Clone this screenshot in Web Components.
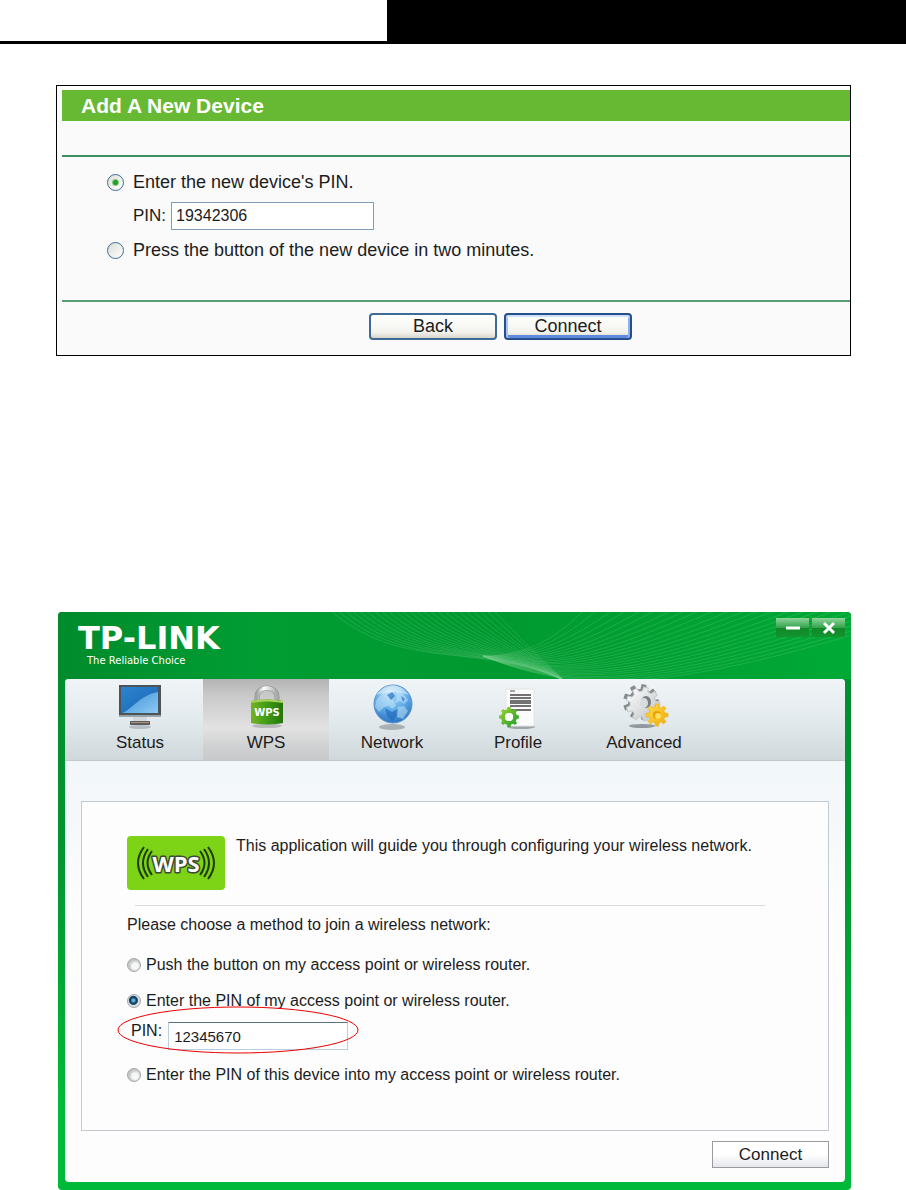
<!DOCTYPE html>
<html lang="en">
<head>
<meta charset="utf-8">
<title>WPS configuration</title>
<style>
  body {
    margin: 0;
    background: #fff;
    color: #1c1c1c;
    font-family: "Liberation Sans", Arial, sans-serif;
  }
  main {
    display: flex;
    flex-direction: column;
    padding: 41px 55px 0 56px;
  }
  wps-utility {
    margin: 256px 0 0 2px;
  }
</style>
</head>
<body>
<page-banner></page-banner>
<main>
  <title-panel>
    <span slot="title">Add A New Device</span>
    <device-form></device-form>
    <xp-button slot="actions">Back</xp-button>
    <xp-button slot="actions" focused>Connect</xp-button>
  </title-panel>

  <wps-utility>
    <tool-tab slot="tabs" icon="status">Status</tool-tab>
    <tool-tab slot="tabs" icon="wps" selected>WPS</tool-tab>
    <tool-tab slot="tabs" icon="network">Network</tool-tab>
    <tool-tab slot="tabs" icon="profile">Profile</tool-tab>
    <tool-tab slot="tabs" icon="advanced">Advanced</tool-tab>
    <wps-form></wps-form>
  </wps-utility>
</main>

<script>
class PageBanner extends HTMLElement {
  constructor() {
    super();
    this.attachShadow({mode: 'open'}).innerHTML = `
      <style>
        :host {
          display: grid;
          grid-template-columns: 427fr 573fr;
          height: 41px;
          border-bottom: 3px solid #000;
        }
        .dark { background: #000; }
      </style>
      <div></div>
      <div class="dark"></div>
    `;
  }
}
customElements.define('page-banner', PageBanner);

class TitlePanel extends HTMLElement {
  constructor() {
    super();
    this.attachShadow({mode: 'open'}).innerHTML = `
      <style>
        :host {
          display: block;
          border: 1px solid #000;
          padding: 4px 0 0 5px;
          background: linear-gradient(#fff 4px, #fafafa 4px);
        }
        h2 {
          margin: 0;
          padding-left: 19px;
          background: #67b933;
          color: #fff;
          font-size: 21px;
          line-height: 31px;
        }
        .content {
          box-sizing: border-box;
          min-height: 147px;
          margin-top: 34px;
          padding: 11px 0 0 45px;
          border-top: 2px solid #3c8f62;
          border-bottom: 2px solid #589c75;
        }
        .actions {
          display: flex;
          justify-content: center;
          gap: 7px;
          padding: 11px 0 15px 89px;
        }
      </style>
      <h2><slot name="title"></slot></h2>
      <div class="content"><slot></slot></div>
      <div class="actions"><slot name="actions"></slot></div>
    `;
  }
}
customElements.define('title-panel', TitlePanel);

class DeviceForm extends HTMLElement {
  constructor() {
    super();
    this.attachShadow({mode: 'open'}).innerHTML = `
      <style>
        :host { display: block; font-size: 18px; }
        .row {
          display: flex;
          align-items: center;
          gap: 9px;
          height: 28px;
        }
        .row + .row { margin-top: 6px; }
        .pin { padding-left: 26px; gap: 5px; font-size: 17px; }
        input[type=radio] {
          appearance: none;
          margin: 0;
          width: 17px;
          height: 17px;
          border: 1px solid #3a6c99;
          border-radius: 50%;
          background: linear-gradient(135deg, #dcdcd6, #fff);
        }
        input[type=radio]:checked {
          background:
            radial-gradient(circle, #21a121 0 2px, transparent 4px),
            linear-gradient(135deg, #dcdcd6, #fff);
        }
        input[type=text] {
          box-sizing: border-box;
          width: 203px;
          height: 28px;
          padding: 0 4px;
          border: 1px solid #7f9db9;
          background: #fff;
          color: inherit;
          font: 16px "Liberation Sans", Arial, sans-serif;
        }
      </style>
      <div class="row">
        <input type="radio" name="method" id="by-pin" checked>
        <label for="by-pin">Enter the new device's PIN.</label>
      </div>
      <div class="row pin">
        <label for="pin">PIN:</label>
        <input type="text" id="pin" value="19342306">
      </div>
      <div class="row">
        <input type="radio" name="method" id="by-button">
        <label for="by-button">Press the button of the new device in two minutes.</label>
      </div>
    `;
  }
}
customElements.define('device-form', DeviceForm);

class XpButton extends HTMLElement {
  constructor() {
    super();
    this.attachShadow({mode: 'open'}).innerHTML = `
      <style>
        :host { display: block; }
        button {
          display: block;
          box-sizing: border-box;
          width: 128px;
          height: 27px;
          padding: 0;
          border: 2px solid #3d6a96;
          border-radius: 4px;
          background: linear-gradient(#fff, #f3f3ee 75%, #d8d5ca);
          color: #1c1c1c;
          font: 18px/23px "Liberation Sans", Arial, sans-serif;
        }
        :host([focused]) button {
          border-color: #26508c;
          box-shadow: inset 0 2px #cfe0fb, inset 2px 0 #a9c4f2, inset -2px 0 #8eb0ee, inset 0 -3px #5f8ade;
        }
      </style>
      <button type="button"><slot></slot></button>
    `;
  }
}
customElements.define('xp-button', XpButton);

// n teeth between radius r and R, around cx, cy
function gear(cx, cy, r, R, n) {
  const pts = [];
  for (let i = 0; i < n; i++) {
    [[-.3, r], [-.2, R], [.2, R], [.3, r]].forEach(([o, d]) => {
      const a = (i + o) / n * Math.PI * 2;
      pts.push((cx + Math.cos(a) * d).toFixed(1) + ',' + (cy + Math.sin(a) * d).toFixed(1));
    });
  }
  return 'M' + pts.join('L') + 'Z';
}

const ICONS = {
  status: `
    <defs>
      <linearGradient id="a" x2="1" y2="1"><stop stop-color="#2d83ce"/><stop offset="1" stop-color="#1b66b4"/></linearGradient>
      <linearGradient id="b" x2="1" y2="1"><stop stop-color="#3f8fd4"/><stop offset="1" stop-color="#8ccbf4"/></linearGradient>
    </defs>
    <ellipse cx="25" cy="43" rx="11" ry="2" fill="#a4adb2" opacity=".7"/>
    <path d="M4 1h42v32H4z" fill="#4b5559"/>
    <path d="M6 3h37v26H6z" fill="url(#a)"/>
    <path d="M43 8v21H8C19 23 26 11 43 8z" fill="url(#b)"/>
    <path d="M4 31h42v2H4z" fill="#9aa3a7"/>
    <path d="M18 33h14v4H18z" fill="#d3d9dc"/>
    <path d="M15 37h20v4H15z" fill="#5b5c5e"/><path d="M16 38h18v1H16z" fill="#b58f76"/>`,
  wps: `
    <defs>
      <linearGradient id="a"><stop stop-color="#74b323"/><stop offset=".5" stop-color="#409c16"/><stop offset="1" stop-color="#25740c"/></linearGradient>
      <linearGradient id="m"><stop stop-color="#a0a5a6"/><stop offset=".35" stop-color="#fff"/><stop offset="1" stop-color="#a4a7a8"/></linearGradient>
    </defs>
    <ellipse cx="26" cy="42" rx="15" ry="2" fill="#9c9c9c" opacity=".6"/>
    <path d="M16 20V13C16 1 36 1 36 13v7" fill="none" stroke="#8d9091" stroke-width="5"/>
    <path d="M16 20V13C16 1 36 1 36 13v7" fill="none" stroke="url(#m)" stroke-width="4"/>
    <path d="M10 17q16-3 32 0v22q-16 3-32 0z" fill="url(#a)"/>
    <path d="M10 17q16-3 32 0v2q-16-3-32 0z" fill="#a8d554"/>
    <text x="26" y="32" text-anchor="middle" font-family="DejaVu Sans" font-weight="bold" font-size="10" fill="#fff">WPS</text>`,
  network: `
    <defs><radialGradient id="a" cx=".45" cy=".2" r=".85"><stop stop-color="#b6def8"/><stop offset=".5" stop-color="#64aee9"/><stop offset="1" stop-color="#256dbf"/></radialGradient></defs>
    <ellipse cx="25" cy="43" rx="13" ry="3" fill="#858e94" opacity=".6"/>
    <circle cx="26" cy="20" r="19" fill="url(#a)" stroke="#5694cc"/>
    <path d="M11 14l5-6 8-2 2 3-3 5 4 3 2 5-4 3-3-3-5 1-5 5-4-5 1-6zM29 7l6 1 6 8-4 4-4-3-5 2 2-5zM31 23l6-1 4 5-5 8-6-2-1-5z" fill="#d5effc" opacity=".45"/>
    <path d="M18 24l7 4 6-3-1 7-5 5-5-5zM20 11l5-3 3 4-4 4zM34 12l4 3-2 3z" fill="#1f68bb" opacity=".65"/>
    <path d="M9 11Q26-9 42 11 26 5 9 11z" fill="#fff" opacity=".45"/>`,
  profile: `
    <defs><linearGradient id="a" x2="1" y2="1"><stop stop-color="#a6d62c"/><stop offset="1" stop-color="#159b30"/></linearGradient></defs>
    <ellipse cx="28" cy="43" rx="14" ry="2" fill="#81898d" opacity=".7"/>
    <path d="M13 5h28v37H13z" fill="#fbfbfb" stroke="#e1e4e6"/>
    <path d="M17 7h5" stroke="#555"/>
    <path d="M17 11h21M17 14h21M17 17h21M17 19h21M17 22h21M17 26h21" stroke="#727272" stroke-width="2"/>
    <path fill-rule="evenodd" d="${gear(16, 33, 8, 10, 8)}M20 33a4 4 0 1 0-8 0a4 4 0 1 0 8 0z" fill="url(#a)"/>
    <circle cx="16" cy="33" r="4" fill="#fff"/>`,
  advanced: `
    <defs>
      <linearGradient id="m" x2="1" y2="1"><stop stop-color="#fff"/><stop offset="1" stop-color="#bcc0c2"/></linearGradient>
      <linearGradient id="g" x2="1" y2="1"><stop stop-color="#ffdf48"/><stop offset="1" stop-color="#edaa0b"/></linearGradient>
    </defs>
    <ellipse cx="23" cy="42" rx="13" ry="2" fill="#70787d" opacity=".7"/>
    <path d="${gear(22, 18, 13, 18, 9)}" fill="#858a8d"/>
    <path d="${gear(24, 20, 13, 17, 9)}" fill="url(#m)" stroke="#c5c9cb"/>
    <ellipse cx="27" cy="18" rx="5" ry="6" fill="#777d81"/><ellipse cx="25" cy="19" rx="4" ry="5" fill="#d8dcdf"/>
    <path d="${gear(38, 31, 8, 11, 8)}" fill="url(#g)" stroke="#f0b81f"/>
    <circle cx="38" cy="31" r="4" fill="#e99d06"/><circle cx="39" cy="32" r="3" fill="#ffe05a"/>`
};

class ToolTab extends HTMLElement {
  connectedCallback() {
    if (this.shadowRoot) return;
    this.attachShadow({mode: 'open'}).innerHTML = `
      <style>
        :host { display: block; }
        button {
          display: flex;
          flex-direction: column;
          align-items: center;
          width: 126px;
          height: 81px;
          padding: 5px 0 0;
          border: 0;
          background: none;
          color: #1c1c1c;
          font: 17px/22px "Liberation Sans", Arial, sans-serif;
        }
        :host([selected]) button {
          background: linear-gradient(#b3b3b3, #c9c9c9 20%, #e2e2e2 60%, #cfd0d1 85%, #c7c9ca);
        }
        svg { display: block; }
      </style>
      <button type="button">
        <svg width="50" height="48" viewBox="0 0 50 48" aria-hidden="true">${ICONS[this.getAttribute('icon')]}</svg>
        <slot></slot>
      </button>
    `;
  }
}
customElements.define('tool-tab', ToolTab);

// two crossing families of thin curves behind the title bar
function waves() {
  const count = 24;
  const mix = (from, to, t) => Math.round(from + (to - from) * t);
  let out = '';
  for (let i = 0; i < count; i++) {
    const t = i / (count - 1);
    out += `<path d="M${mix(272, 435, t)} -2C${mix(345, 455, t)} ${mix(62, 18, t)} ${mix(420, 475, t)} ${mix(28, 40, t)} 507 69"/>`;
    out += `<path d="M425 44C${mix(470, 510, t)} ${mix(44, 78, t)} ${mix(500, 600, t)} ${mix(25, 88, t)} ${mix(528, 860, t)} ${mix(-4, 2, t)}"/>`;
  }
  return out;
}

class WpsUtility extends HTMLElement {
  constructor() {
    super();
    this.attachShadow({mode: 'open'}).innerHTML = `
      <style>
        :host {
          display: block;
          position: relative;
          padding: 0 6px 8px 7px;
          border-radius: 4px;
          overflow: hidden;
          background: linear-gradient(#008f2d, #00942f 40%, #00b939 85%);
        }
        /* decoration under the title bar */
        .waves {
          position: absolute;
          top: 0;
          left: 0;
          width: 100%;
          height: 67px;
          background: linear-gradient(90deg, #008b2c, #009d33 25%, #009930 55%, #00a936);
        }
        header {
          position: relative;
          display: flex;
          justify-content: space-between;
          align-items: flex-start;
          height: 67px;
          color: #fff;
        }
        .brand { padding: 9px 0 0 13px; }
        .name {
          font: bold 32px/34px "DejaVu Sans", sans-serif;
        }
        .motto {
          padding-left: 9px;
          font: 10px/12px "DejaVu Sans", sans-serif;
        }
        .controls { display: flex; gap: 3px; padding-top: 6px; }
        .controls button {
          width: 33px;
          height: 19px;
          padding: 0;
          border: 0;
          background: linear-gradient(#8fd59a, #35a44d 50%, #118729 51%, #13942f);
        }
        .controls svg { display: block; margin: auto; }
        .inner {
          position: relative;
          border-radius: 4px;
          overflow: hidden;
          background: linear-gradient(#f2f7f9 81px, #f4f8fb 130px, #fdfdfd 240px);
        }
        nav {
          display: flex;
          padding-left: 12px;
          background: linear-gradient(#f0f4f6, #e3eaee 50%, #d0d8dc);
          box-shadow: 0 1px #c3cacd;
        }
      </style>
      <svg class="waves" viewBox="0 0 793 67" preserveAspectRatio="xMaxYMin slice" fill="none" stroke="#7bd38e" stroke-opacity=".25" aria-hidden="true">${waves()}</svg>
      <header>
        <div class="brand">
          <div class="name">TP-LINK</div>
          <div class="motto">The Reliable Choice</div>
        </div>
        <div class="controls">
          <button type="button" aria-label="Minimize">
            <svg width="16" height="14" viewBox="0 0 16 14"><path d="M1 7h14" stroke="#fff" stroke-width="3"/></svg>
          </button>
          <button type="button" aria-label="Close">
            <svg width="16" height="14" viewBox="0 0 16 14"><path d="M3 2l10 10M13 2L3 12" stroke="#fff" stroke-width="3"/></svg>
          </button>
        </div>
      </header>
      <div class="inner">
        <nav><slot name="tabs"></slot></nav>
        <slot></slot>
      </div>
    `;
  }
}
customElements.define('wps-utility', WpsUtility);

class WpsBadge extends HTMLElement {
  constructor() {
    super();
    this.attachShadow({mode: 'open'}).innerHTML = `
      <style>
        :host { display: block; }
        svg { display: block; }
      </style>
      <svg width="98" height="54" viewBox="0 0 98 54">
        <rect width="98" height="54" rx="4" fill="#7dd316"/>
        <g fill="none" stroke="#1d3a08" stroke-width="2">
          <path d="M17 11q-12 16 0 32M21 13q-10 14 0 28M25 15q-9 12 0 24"/>
          <path d="M81 11q12 16 0 32M77 13q10 14 0 28M73 15q9 12 0 24"/>
        </g>
        <text x="49" y="36" text-anchor="middle" font-family="Open Sans" font-weight="bold" font-size="22" fill="#fff" stroke="#3d4a35" stroke-width="3" stroke-linejoin="round" paint-order="stroke">WPS</text>
      </svg>
    `;
  }
}
customElements.define('wps-badge', WpsBadge);

class WpsForm extends HTMLElement {
  constructor() {
    super();
    this.attachShadow({mode: 'open'}).innerHTML = `
      <style>
        :host {
          display: block;
          padding: 41px 16px 14px;
          font-size: 16px;
        }
        .box {
          box-sizing: border-box;
          min-height: 330px;
          padding: 34px 45px 0;
          border: 1px solid #c3c9cf;
          background: #fdfdfd;
        }
        .intro { display: flex; gap: 11px; }
        p { margin: 0; line-height: 20px; }
        hr {
          margin: 15px 18px 7px 8px;
          border: 0;
          border-top: 1px solid #d8dadd;
        }
        .row { display: flex; align-items: center; gap: 5px; height: 24px; }
        .first { margin-top: 16px; }
        .second, .last { margin-top: 12px; }
        .pin {
          position: relative;
          align-items: flex-start;
          gap: 6px;
          height: 29px;
          margin-top: 9px;
          padding-left: 4px;
        }
        /* hand-drawn mark around the PIN field */
        .mark {
          position: absolute;
          left: -10px;
          top: -17px;
          pointer-events: none;
        }
        input[type=radio] {
          appearance: none;
          margin: 0;
          width: 14px;
          height: 14px;
          border: 1px solid #a3a5a6;
          border-radius: 50%;
          background: radial-gradient(circle at 60% 60%, #f7f7f7 0 3px, #c4c7c8 6px);
        }
        input[type=radio]:checked {
          background: radial-gradient(circle at 45% 45%, #61b5d9 0 1px, #133f65 3px 4px, #d9dfe3 5px);
        }
        input[type=text] {
          box-sizing: border-box;
          width: 180px;
          height: 28px;
          padding: 0 5px;
          border: 1px solid #b9cfe0;
          border-top: 1px solid #5c7085;
          background: #fff;
          color: inherit;
          font: 15px "Liberation Sans", Arial, sans-serif;
        }
        footer { display: flex; justify-content: flex-end; padding-top: 10px; }
        footer button {
          width: 117px;
          height: 27px;
          padding: 0;
          border: 1px solid #999b9f;
          background: linear-gradient(#fff 50%, #e5e6ec);
          color: #1c1c1c;
          font: 17px "Liberation Sans", Arial, sans-serif;
        }
      </style>
      <div class="box">
        <div class="intro">
          <wps-badge></wps-badge>
          <p>This application will guide you through configuring your wireless network.</p>
        </div>
        <hr>
        <div class="row">Please choose a method to join a wireless network:</div>
        <div class="row first">
          <input type="radio" name="join" id="push">
          <label for="push">Push the button on my access point or wireless router.</label>
        </div>
        <div class="row second">
          <input type="radio" name="join" id="router-pin" checked>
          <label for="router-pin">Enter the PIN of my access point or wireless router.</label>
        </div>
        <div class="row pin">
          <label for="pin">PIN:</label>
          <input type="text" id="pin" value="12345670">
          <svg class="mark" width="242" height="50" viewBox="0 0 242 50" aria-hidden="true">
            <ellipse cx="121" cy="25" rx="120" ry="23" fill="none" stroke="#f00000"/>
          </svg>
        </div>
        <div class="row last">
          <input type="radio" name="join" id="device-pin">
          <label for="device-pin">Enter the PIN of this device into my access point or wireless router.</label>
        </div>
      </div>
      <footer><button type="button">Connect</button></footer>
    `;
  }
}
customElements.define('wps-form', WpsForm);
</script>
</body>
</html>
